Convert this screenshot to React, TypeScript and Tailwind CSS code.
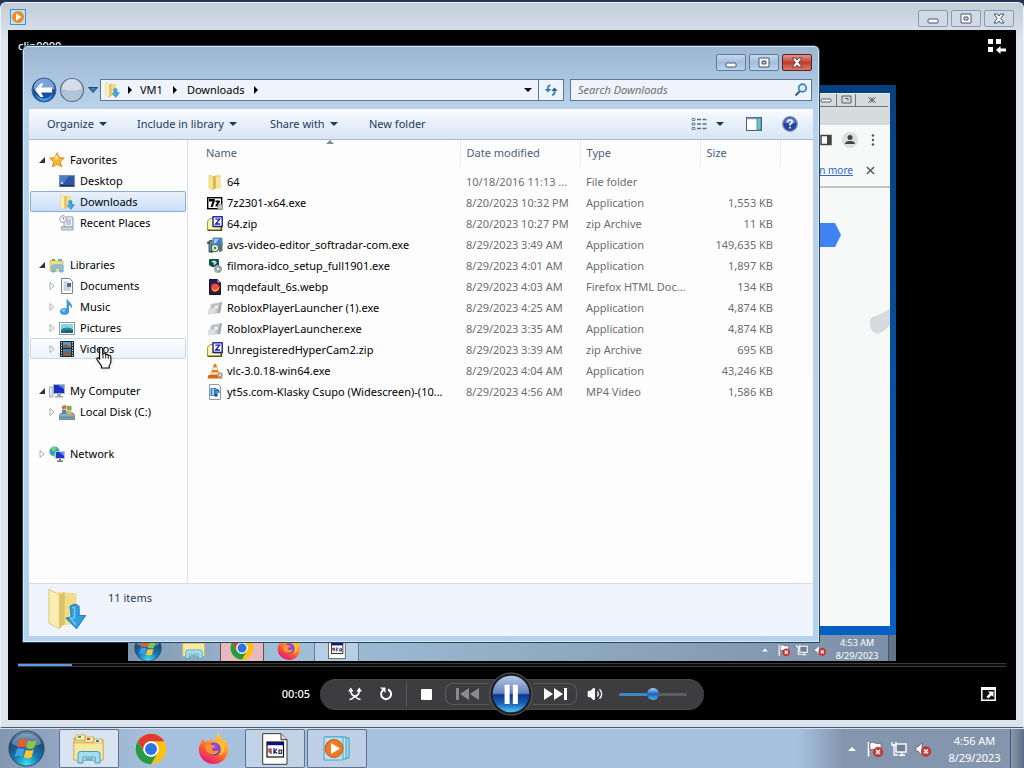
import React, { useState } from 'react';
import { Volume2 } from 'lucide-react';

type IconProps = { className?: string };

/* ---------- small glyphs ---------- */

const DownTriangle: React.FC<IconProps> = ({ className = 'w-2 h-1 text-[#1e395b]' }) => (
  <svg viewBox="0 0 8 4" className={className} fill="currentColor"><path d="M0 0h8L4 4z" /></svg>
);

const RightTriangle: React.FC<IconProps> = ({ className = 'w-1 h-2 text-black' }) => (
  <svg viewBox="0 0 4 8" className={className} fill="currentColor"><path d="M0 0l4 4-4 4z" /></svg>
);

const TreeArrow = ({ open }: { open: boolean }) => (
  <svg viewBox="0 0 8 8" className="w-2 h-2 shrink-0">
    {open ? <path d="M7 1v6H1z" fill="#333" /> : <path d="M2 .5v7L6 4z" fill="#fff" stroke="#999" strokeWidth=".8" />}
  </svg>
);

/* ---------- folder and file icons ---------- */

const FolderIcon: React.FC<IconProps> = ({ className = 'w-4 h-4' }) => (
  <svg viewBox="0 0 16 16" className={className}>
    <path d="M6 2l7-1v13l-7 1z" fill="#e9cf6c" />
    <path d="M8 2.500l6 .5v11l-5 .8z" fill="#f5e49a" />
    <path d="M2 1l4 1.500V16l-4-2z" fill="#f8e796" stroke="#d3b551" strokeWidth=".5" />
    <path d="M6 2.500l3-.5v12l-3 2z" fill="#dcbc52" />
  </svg>
);

const DownloadFolderIcon: React.FC<IconProps> = ({ className = 'w-4 h-4' }) => (
  <svg viewBox="0 0 32 32" className={className}>
    <path d="M10 3l14 1v23l-14 2z" fill="#f1dc8c" />
    <path d="M3 1l8 4v26l-8-4z" fill="#fbeeb0" stroke="#d9bd62" strokeWidth=".6" />
    <path d="M11 5l4-2v24l-4 4z" fill="#dcc06a" />
    <path d="M19 14q4-3 7 0v7h5l-7 10-8-8 4-1z" fill="#2f9fe0" stroke="#1470b4" strokeWidth=".7" />
    <path d="M20.500 15h2v8h-3l4 5" fill="none" stroke="#7cc9f3" strokeWidth="1" />
  </svg>
);

const StarIcon = () => (
  <svg viewBox="0 0 16 16" className="w-4 h-4">
    <path d="M8 .8l2.200 4.700 5.100.6-3.800 3.500 1 5.200L8 12.300l-4.500 2.500 1-5.200L.7 6.100l5.100-.6z" fill="#fbb631" stroke="#d17a17" strokeWidth=".8" />
    <path d="M8 2.500L9.500 6 8 8 5 6.500z" fill="#fee08a" />
  </svg>
);

const DesktopIcon = () => (
  <svg viewBox="0 0 16 16" className="w-4 h-4">
    <rect x=".5" y="2.500" width="15" height="11" fill="#2c56a8" stroke="#7c8da8" />
    <path d="M1 3h9L4 11H1z" fill="#4f7bcd" />
    <path d="M1 12h14v1.500H1z" fill="#17315f" />
    <path d="M2 9h2v2H2z" fill="#b5d0f2" />
  </svg>
);

const RecentIcon = () => (
  <svg viewBox="0 0 16 16" className="w-4 h-4">
    <path d="M5 2h9v10H5z" fill="#eef2f5" stroke="#8b99a5" />
    <path d="M7 5h5M7 7h5M7 9h5" stroke="#8da2b5" />
    <path d="M2 12h12v3H3z" fill="#d5dde3" stroke="#8592a0" strokeWidth=".8" />
    <circle cx="4" cy="4" r="3.400" fill="#f7f9fa" stroke="#9aa7b2" />
    <path d="M4 2v2h1.500" stroke="#5f7182" strokeWidth=".8" fill="none" />
  </svg>
);

const LibrariesIcon = () => (
  <svg viewBox="0 0 16 16" className="w-4 h-4">
    <path d="M1 3h5l1 1h7v10H1z" fill="#f0dd85" stroke="#cbb04f" strokeWidth=".7" />
    <path d="M3 2h3v2H3z" fill="#6fb24a" />
    <path d="M9 2h4v2H9z" fill="#60a9df" />
    <path d="M3 15V9q0-1 1-1h9q1 0 1 1v6h-3v-4H6v4z" fill="#8bc9ea" stroke="#4a94c0" strokeWidth=".7" />
  </svg>
);

const DocumentsIcon = () => (
  <svg viewBox="0 0 16 16" className="w-4 h-4">
    <path d="M2.500.5h8l3 3v12h-11z" fill="#fdfdfe" stroke="#76838f" />
    <path d="M4.500 4h4M4.500 6h3M4.500 8h3M4.500 10h7M4.500 12h7" stroke="#9aa6b2" />
    <path d="M8 5h4v4H8z" fill="#56697c" />
  </svg>
);

const MusicIcon = () => (
  <svg viewBox="0 0 16 16" className="w-4 h-4">
    <path d="M8 .5c1 2.500 5 3 4.500 8-.7-2-2-2.500-3-2.700V12.500H8z" fill="#41a4ea" stroke="#1b76bd" strokeWidth=".6" />
    <ellipse cx="5.500" cy="12.500" rx="4.200" ry="3" fill="#3d9fe8" stroke="#1f7ac4" strokeWidth=".6" />
    <ellipse cx="4.500" cy="11.600" rx="1.800" ry="1" fill="#a5d8f8" />
  </svg>
);

const PicturesIcon = () => (
  <svg viewBox="0 0 16 16" className="w-4 h-4">
    <rect x=".5" y="2.500" width="15" height="12" fill="#fff" stroke="#8a97a4" />
    <rect x="2" y="4" width="12" height="9" fill="#8ad3ea" />
    <path d="M2 9q6-3 12 0v4H2z" fill="#2b8b81" />
    <path d="M2 11q6-2 12 0v2H2z" fill="#1d5f87" />
  </svg>
);

const VideosIcon = () => (
  <svg viewBox="0 0 16 16" className="w-4 h-4">
    <path d="M1 0h14v16H1z" fill="#20292f" />
    <path d="M4 1h8v6H4z" fill="#4f9fcb" />
    <path d="M4 8h8v7H4z" fill="#3881a9" />
    <path d="M4 5l3-2 5 3v1H4zM4 13l4-3 4 3v2H4z" fill="#8a5d47" />
    <path d="M2.500 1v14M13.500 1v14" stroke="#dfe7eb" strokeDasharray="1.300 1.300" />
  </svg>
);

const ComputerIcon = () => (
  <svg viewBox="0 0 16 16" className="w-4 h-4">
    <path d="M.5 4h3.500v10H.5z" fill="#dfe5ea" stroke="#8793a0" strokeWidth=".7" />
    <path d="M4.500 1.500h11v9h-11z" fill="#1b2fc4" stroke="#aab5c1" />
    <path d="M9 2h6v4z" fill="#6f8cf0" />
    <path d="M8 11h4v2H8zM6 13h8v1.500H6z" fill="#9da8b4" />
  </svg>
);

const DiskIcon = () => (
  <svg viewBox="0 0 16 16" className="w-4 h-4">
    <path d="M2 9h12l2 3v3.500H0V12z" fill="#9aa9b4" stroke="#5c6d7a" strokeWidth=".7" />
    <path d="M1 12.500h14v2H1z" fill="#5f91a9" />
    <path d="M3 2.500q2-2 4.500-1V5Q5 4 3 6z" fill="#d9683c" />
    <path d="M8 1.500q2 1 4.500 0V6Q10 7 8 6z" fill="#7dab48" />
    <path d="M3 6.500Q5 5 7.500 6v4H3z" fill="#4a86c4" />
    <path d="M8 6.500q2 1 4.500.2V10H8z" fill="#e5b73a" />
  </svg>
);

const NetworkIcon = () => (
  <svg viewBox="0 0 16 16" className="w-4 h-4">
    <circle cx="5.500" cy="5.500" r="5" fill="#2f9fbd" />
    <path d="M2 2q4-3 6 1L4 6zM3 9l4-2 1 3z" fill="#7ed06a" />
    <path d="M6.500 5.500h9v7h-9z" fill="#1d35c9" stroke="#b9c4cf" />
    <path d="M10 6h5v4z" fill="#6b89ee" />
    <path d="M10 13h2v1.500h2V16H8v-1.500h2z" fill="#6f7b88" />
  </svg>
);

const SevenZipIcon = () => (
  <svg viewBox="0 0 16 16" className="w-4 h-4">
    <rect x=".7" y="2.700" width="14" height="11" fill="#fff" stroke="#000" strokeWidth="1.400" />
    <path d="M2 4h5.800v2L5.800 12H3.500l2-5.500H2z" />
    <path d="M8.500 5.500h4.300v1.800l-2 2.400h2v1.800H8.500V9.700l2-2.400h-2z" />
    <circle cx="13" cy="12" r="2.900" fill="#98a1a5" />
    <path d="M11 12h4M13 10v4" stroke="#d8dddf" />
  </svg>
);

const ZipIcon = () => (
  <svg viewBox="0 0 16 16" className="w-4 h-4">
    <path d="M.6 14V5.500Q1 3.500 3.500 2.500H7V11h6.500v3z" fill="#fafab0" stroke="#96963c" strokeWidth="1" />
    <path d="M.6 14.300h14V11" stroke="#55551f" strokeWidth="1.200" fill="none" />
    <rect x="6" y=".8" width="9.200" height="9.600" fill="#fff" stroke="#1a1aa0" strokeWidth="1.400" />
    <path d="M8.300 3.200h4.300L8.600 8h4.400" fill="none" stroke="#1a1aa0" strokeWidth="1.300" />
  </svg>
);

const SetupIcon = () => (
  <svg viewBox="0 0 16 16" className="w-4 h-4">
    <path d="M6 1h9v8H6z" fill="#3a7fd0" stroke="#7b8c99" />
    <path d="M7 2h5L8 7H7z" fill="#9bcdf3" />
    <path d="M.5 5h2v1.500h-2zM2 4l3-1v12H2z" fill="#6d8f94" stroke="#2e4448" strokeWidth=".8" />
    <circle cx="8" cy="11" r="3.800" fill="#dcebe0" stroke="#33574f" strokeWidth="1" />
    <circle cx="8" cy="11" r="1.300" fill="#2d8d5a" />
    <path d="M12 9l3.500-4v9l-3.500 1z" fill="#5b7277" />
    <path d="M3 15h3" stroke="#2e4448" />
  </svg>
);

const FilmoraIcon = () => (
  <svg viewBox="0 0 16 16" className="w-4 h-4">
    <path d="M3 1h8q1 0 1 1v6q0 1-1 1H5L2 7V2q0-1 1-1z" fill="#174b4c" />
    <path d="M4 3l4-.5 2 2-3 3-.5-2.500z" fill="#a6e6d8" />
    <circle cx="11" cy="11" r="4" fill="#a6afb1" />
    <path d="M8 10l5 4M11 7.500l3 4" stroke="#6f7c7f" strokeWidth=".8" />
    <circle cx="11" cy="11" r="1.300" fill="#eef1f1" />
  </svg>
);

const WebpIcon = () => (
  <svg viewBox="0 0 16 16" className="w-4 h-4">
    <path d="M2.500.5h8l3 3v12h-11z" fill="#281a4f" stroke="#18112f" />
    <circle cx="8" cy="8.500" r="4" fill="#ef4a3d" />
    <path d="M4.500 9q2 3 5.500 1t1-5q3 3 .3 6t-5.300 1z" fill="#fd9c2b" />
    <path d="M10.500.5v3h3z" fill="#b7a9d5" />
  </svg>
);

const RobloxIcon = () => (
  <svg viewBox="0 0 16 16" className="w-4 h-4">
    <path d="M4 4l11-2-2 11-11 1z" fill="#bfc3c5" />
    <path d="M13 3l2-1-2 11-2 .2z" fill="#9ea3a6" />
    <path d="M1 9l8-1-1 6-7 .5z" fill="#dcdedf" />
    <path d="M8 6l3-.4-.5 3-3 .2z" fill="#f4f5f5" />
  </svg>
);

const VlcIcon = () => (
  <svg viewBox="0 0 16 16" className="w-4 h-4">
    <path d="M7 1h2l4 12H3z" fill="#ee7d19" />
    <path d="M6 4.500h4l.8 2.500H5.200zM4.500 9.500h7l.7 2H3.800z" fill="#f3efea" />
    <path d="M1.500 12h13l1 3.500H.5z" fill="#d9640f" />
    <circle cx="13" cy="12" r="2.800" fill="#b1a58c" />
    <circle cx="13" cy="12" r="1" fill="#f0ece0" />
  </svg>
);

const Mp4Icon = () => (
  <svg viewBox="0 0 16 16" className="w-4 h-4">
    <path d="M2.500.5h9l2 2v13h-11z" fill="#fbfdff" stroke="#8d9aa6" />
    <path d="M3.500 4h6v8h-6z" fill="#2f86c9" />
    <path d="M5 5h2v1.500H5zM5 7.300h2v1.500H5zM5 9.600h2v1.500H5z" fill="#d9eefb" />
    <path d="M10 5v6M10 5.500q2.500 1 2 3.500" stroke="#14578d" strokeWidth="1.100" fill="none" />
    <circle cx="9" cy="11.300" r="1.500" fill="#14578d" />
  </svg>
);

/* ---------- taskbar and brand icons ---------- */

const StartOrb: React.FC<IconProps> = ({ className }) => (
  <svg viewBox="0 0 40 40" className={className}>
    <defs>
      <radialGradient id="orb" cx=".5" cy=".95" r=".95">
        <stop offset="0" stopColor="#3fe0f5" />
        <stop offset=".4" stopColor="#1476ae" />
        <stop offset=".75" stopColor="#1e4a78" />
        <stop offset="1" stopColor="#6f93b6" />
      </radialGradient>
    </defs>
    <circle cx="20" cy="20" r="19" fill="url(#orb)" stroke="#274865" strokeWidth="1" />
    <path d="M4 15a17 17 0 0132 0q-16 7-32 0z" fill="#fff" opacity=".3" />
    <path d="M12 11q4-2.500 8.500-.4L18.300 19q-4.300-2-8.300.2z" fill="#ef5a26" />
    <path d="M22 11.300q4 2 8.500-.3L28.300 19.500q-4.300 2-8.500 0z" fill="#8cc63e" />
    <path d="M9.500 20.800q4-2.300 8.300-.2L15.600 29q-4-2.200-8.300.1z" fill="#3fa0e8" />
    <path d="M19.300 21.300q4.200 2 8.500-.1L25.500 29.500q-4 2-8.300 0z" fill="#fdc82f" />
  </svg>
);

const ExplorerIcon: React.FC<IconProps> = ({ className }) => (
  <svg viewBox="0 0 32 30" className={className}>
    <path d="M1 4h10l2 2h17v20H1z" fill="#e9cf74" stroke="#b89a42" strokeWidth=".8" />
    <path d="M3 1h9v5H3zM12 3h9v5h-9zM20 5h9v5h-9z" fill="#f9f1bf" stroke="#c7a94e" strokeWidth=".8" />
    <path d="M5 2h3v2H5z" fill="#3ca84a" />
    <path d="M14 4h3v2h-3z" fill="#d4472c" />
    <path d="M23 6h3v2h-3z" fill="#3d7fd1" />
    <path d="M1 9h29v17H1z" fill="#f8e9a0" stroke="#d1b358" strokeWidth=".8" />
    <path d="M5 29v-9q0-2.500 2.500-2.500h17Q27 17.500 27 20v9h-5v-6H10v6z" fill="#a4dcf3" stroke="#3c9dca" strokeWidth="1" />
    <path d="M12 24h8v3h-8z" fill="#66b7dc" />
  </svg>
);

const ChromeIcon: React.FC<IconProps> = ({ className }) => (
  <svg viewBox="0 0 48 48" className={className}>
    <circle cx="24" cy="24" r="23" fill="#fbc116" />
    <path d="M4.100 12.500a23 23 0 0139.800 0H24a11.500 11.500 0 00-10 17.250z" fill="#df3b2f" />
    <path d="M4.100 12.500L14 29.750A11.500 11.500 0 0034 29.750L24 47A23 23 0 014.100 12.500z" fill="#259b48" />
    <circle cx="24" cy="24" r="11.500" fill="#fff" />
    <circle cx="24" cy="24" r="9" fill="#2b74e3" />
  </svg>
);

const FirefoxIcon: React.FC<IconProps> = ({ className }) => (
  <svg viewBox="0 0 32 32" className={className}>
    <defs>
      <linearGradient id="fox" x1=".85" y1="0" x2=".3" y2="1">
        <stop offset="0" stopColor="#ffe14a" />
        <stop offset=".4" stopColor="#ff9a2b" />
        <stop offset=".7" stopColor="#fb5237" />
        <stop offset="1" stopColor="#e31587" />
      </linearGradient>
      <radialGradient id="globe" cx=".6" cy=".3" r=".8">
        <stop offset="0" stopColor="#a04fe8" />
        <stop offset="1" stopColor="#4f35b8" />
      </radialGradient>
    </defs>
    <path d="M2.500 11Q4 7.500 6 6q0 2 1 3 2-1 4.500-1Q13 5.500 15 5q-.5 2 .5 3.500 2-.5 3 0Q17.500 4 21 0q1.500 4.500 6 8l.8-1.500Q31 11 31 17a15 14.500 0 01-30 1q-.5-4 1.500-7z" fill="url(#fox)" />
    <circle cx="16.500" cy="16.500" r="6.800" fill="url(#globe)" />
    <path d="M8 12q4-1.500 6.500.3 2.500.2 3.500 1.200-.5 1.800-3.500 2.200-.5 2.800 3 3 2 0 4-1.500-1 4.500-5.500 5-6.500-.2-8-6-.3-2.500 0-4.200z" fill="#ff9133" />
    <path d="M17 8q6 1 7 7 1 5-3 8.500 6-1.500 6.500-8Q27 10 22.500 8z" fill="#ffc23a" />
  </svg>
);

const DllPageIcon: React.FC<IconProps> = ({ className }) => (
  <svg viewBox="0 0 26 32" className={className}>
    <path d="M.7.700h18.300l6 6V31.300H.7z" fill="#fff" stroke="#333" strokeWidth="1" />
    <path d="M19 .7v6h6" fill="#ddd" stroke="#333" />
    <rect x="5" y="9" width="16.500" height="15" fill="#fff" stroke="#111" strokeWidth="1.200" />
    <path d="M5 9h16.500v3.200H5z" fill="#10107c" />
    <path d="M7 16h2v3H7zM7 16v1M9 16v5" fill="none" stroke="#8c1c1c" strokeWidth="1.200" />
    <path d="M12 15v6M15 16l-2.500 2 2.500 2.500" stroke="#1c1c8c" strokeWidth="1.200" fill="none" />
    <path d="M17 17h2.500v3.500H17z" fill="none" stroke="#222" strokeWidth="1.200" />
  </svg>
);

const MediaPlayerIcon: React.FC<IconProps> = ({ className }) => (
  <svg viewBox="0 0 28 26" className={className}>
    <path d="M4 2h22v20H4z" fill="#a9dbee" stroke="#3e9cc4" />
    <path d="M2 1h21v22H2z" fill="#c4e6f3" stroke="#3e9cc4" />
    <path d="M1 1h19v23H1z" fill="#b9dff0" stroke="#4ba6cc" />
    <circle cx="11" cy="12.500" r="9" fill="#ef7a22" stroke="#cf5a10" />
    <path d="M8 7l9 5.500L8 18z" fill="#fff" />
  </svg>
);

const WmpTitleIcon = () => (
  <svg viewBox="0 0 16 16" className="w-4 h-4">
    <rect x=".5" y=".5" width="15" height="15" fill="#c2e2f5" stroke="#3d93cc" />
    <circle cx="8" cy="8" r="6" fill="#f08a22" />
    <path d="M6 4.300L11.500 8 6 11.700z" fill="#fff" />
  </svg>
);

const FlagIcon: React.FC<IconProps> = ({ className }) => (
  <svg viewBox="0 0 16 16" className={className}>
    <path d="M1.500 1v14.500" stroke="#fff" strokeWidth="1.600" />
    <path d="M3 2q3-1.500 5 0t6 0v7q-3 1.500-6 0t-5 0z" fill="#fff" stroke="#3d4b5c" strokeWidth=".6" />
    <circle cx="11" cy="11" r="4.700" fill="#d8362f" stroke="#a01e1a" strokeWidth=".6" />
    <path d="M9 9l4 4M13 9l-4 4" stroke="#fff" strokeWidth="1.500" />
  </svg>
);

const NetTrayIcon: React.FC<IconProps> = ({ className }) => (
  <svg viewBox="0 0 16 16" className={className}>
    <rect x="5" y="3" width="10" height="8" fill="#6d7f96" stroke="#fff" strokeWidth="1.400" />
    <path d="M8 14.300h6M11 11v3" stroke="#fff" strokeWidth="1.500" />
    <path d="M1 1v3h4V1M3 4v10h4" stroke="#fff" strokeWidth="1.300" fill="none" />
  </svg>
);

const MutedIcon: React.FC<IconProps> = ({ className }) => (
  <svg viewBox="0 0 16 16" className={className}>
    <path d="M1 6h2l4-4.500v13L3 10H1z" fill="#fff" stroke="#3d4b5c" strokeWidth=".6" />
    <circle cx="11" cy="10.500" r="4.700" fill="#d8362f" stroke="#a01e1a" strokeWidth=".6" />
    <path d="M9 8.500l4 4M13 8.500l-4 4" stroke="#fff" strokeWidth="1.500" />
  </svg>
);

/* ---------- window chrome ---------- */

const captionGlyphs = {
  Minimize: <rect x="4" y="8" width="10" height="4" rx="1" />,
  Maximize: <path fillRule="evenodd" d="M4 3h10v9H4zM7 6h4v3H7z" />,
  Close: <path d="M4 3h3.500L9 5l1.500-2H14l-3.300 4.500L14 12h-3.500L9 10l-1.500 2H4l3.300-4.500z" />,
};

const CaptionButtons = ({ active }: { active: boolean }) => (
  <div className="flex gap-[3px]">
    {(Object.keys(captionGlyphs) as (keyof typeof captionGlyphs)[]).map((name) => {
      const red = active && name === 'Close';
      return (
        <button
          key={name}
          aria-label={name}
          className={`w-[30px] h-[17px] flex items-center justify-center rounded-xs border ${
            red
              ? 'border-[#5c1f23] bg-linear-to-b from-[#dc9a90] via-[#c03b2c] to-[#d77a62]'
              : active
                ? 'border-[#5f7a9a] bg-linear-to-b from-[#c5d8ec] via-[#a3bdd9] to-[#bdd5ee]'
                : 'border-[#8d99ad] bg-[#cfdae6]'
          }`}
        >
          <svg viewBox="0 0 18 15" className="w-[18px] h-[15px]" fill="#fff" stroke={red ? '#6b3a3a' : '#46536b'} strokeWidth="1">
            {captionGlyphs[name]}
          </svg>
        </button>
      );
    })}
  </div>
);

/* ---------- explorer window ---------- */

const places = [
  [
    { label: 'Favorites', icon: <StarIcon />, level: 0, arrow: 'open' },
    { label: 'Desktop', icon: <DesktopIcon />, level: 1, arrow: '' },
    { label: 'Downloads', icon: <DownloadFolderIcon />, level: 1, arrow: '' },
    { label: 'Recent Places', icon: <RecentIcon />, level: 1, arrow: '' },
  ],
  [
    { label: 'Libraries', icon: <LibrariesIcon />, level: 0, arrow: 'open' },
    { label: 'Documents', icon: <DocumentsIcon />, level: 1, arrow: 'closed' },
    { label: 'Music', icon: <MusicIcon />, level: 1, arrow: 'closed' },
    { label: 'Pictures', icon: <PicturesIcon />, level: 1, arrow: 'closed' },
    { label: 'Videos', icon: <VideosIcon />, level: 1, arrow: 'closed' },
  ],
  [
    { label: 'My Computer', icon: <ComputerIcon />, level: 0, arrow: 'open' },
    { label: 'Local Disk (C:)', icon: <DiskIcon />, level: 1, arrow: 'closed' },
  ],
  [{ label: 'Network', icon: <NetworkIcon />, level: 0, arrow: 'closed' }],
];

const files = [
  { name: '64', icon: <FolderIcon />, date: '10/18/2016 11:13 ...', type: 'File folder', size: '' },
  { name: '7z2301-x64.exe', icon: <SevenZipIcon />, date: '8/20/2023 10:32 PM', type: 'Application', size: '1,553 KB' },
  { name: '64.zip', icon: <ZipIcon />, date: '8/20/2023 10:27 PM', type: 'zip Archive', size: '11 KB' },
  { name: 'avs-video-editor_softradar-com.exe', icon: <SetupIcon />, date: '8/29/2023 3:49 AM', type: 'Application', size: '149,635 KB' },
  { name: 'filmora-idco_setup_full1901.exe', icon: <FilmoraIcon />, date: '8/29/2023 4:01 AM', type: 'Application', size: '1,897 KB' },
  { name: 'mqdefault_6s.webp', icon: <WebpIcon />, date: '8/29/2023 4:03 AM', type: 'Firefox HTML Doc...', size: '134 KB' },
  { name: 'RobloxPlayerLauncher (1).exe', icon: <RobloxIcon />, date: '8/29/2023 4:25 AM', type: 'Application', size: '4,874 KB' },
  { name: 'RobloxPlayerLauncher.exe', icon: <RobloxIcon />, date: '8/29/2023 3:35 AM', type: 'Application', size: '4,874 KB' },
  { name: 'UnregisteredHyperCam2.zip', icon: <ZipIcon />, date: '8/29/2023 3:39 AM', type: 'zip Archive', size: '695 KB' },
  { name: 'vlc-3.0.18-win64.exe', icon: <VlcIcon />, date: '8/29/2023 4:04 AM', type: 'Application', size: '43,246 KB' },
  { name: 'yt5s.com-Klasky Csupo (Widescreen)-(10...', icon: <Mp4Icon />, date: '8/29/2023 4:56 AM', type: 'MP4 Video', size: '1,586 KB' },
];

const HandCursor = () => (
  <svg viewBox="0 0 18 24" className="absolute left-[66px] top-2 w-[18px] h-6 drop-shadow-sm">
    <path
      d="M5 1.500q1.700 0 1.700 2V9l.3-1.500q2-.7 2.600 1 2-.6 2.600.8 2.300-.4 2.700 1.500V16q-.4 2-1.700 3.500V22H5.500v-2L1 13.500q-.6-2 1.600-1.500l1 1V3.500q0-2 1.400-2z"
      fill="#fff"
      stroke="#000"
      strokeWidth="1.100"
    />
    <path d="M7 9v3.500M9.700 9v3.500M12.300 10v3" stroke="#000" strokeWidth=".9" />
  </svg>
);

const Sidebar = () => {
  const [selected, setSelected] = useState('Downloads');
  return (
    <nav className="w-[159px] shrink-0 border-r border-[#d9e2ee] px-px pt-[9px] flex flex-col gap-[21px]">
      {places.map((group) => (
        <ul key={group[0].label}>
          {group.map((p) => (
            <li key={p.label} className="relative">
              <button
                onClick={() => setSelected(p.label)}
                className={`w-full h-[21px] flex items-center border rounded-xs text-black ${p.level ? 'pl-[17px]' : 'pl-[7px]'} ${
                  p.label === selected
                    ? 'border-[#84acdd] bg-linear-to-b from-[#eaf2fc] to-[#c9def7]'
                    : p.label === 'Videos'
                      ? 'border-[#c4d8ee] bg-linear-to-b from-[#fafcfe] to-[#edf3fb]'
                      : 'border-transparent'
                }`}
              >
                <span className="w-[11px] flex">{p.arrow && <TreeArrow open={p.arrow === 'open'} />}</span>
                {p.icon}
                <span className="ml-[5px] whitespace-nowrap">{p.label}</span>
              </button>
              {p.label === 'Videos' && <HandCursor />}
            </li>
          ))}
        </ul>
      ))}
    </nav>
  );
};

const FileTable = () => (
  <div className="flex-1 min-w-0 overflow-hidden">
    <table className="w-full table-fixed text-left whitespace-nowrap">
      <colgroup>
        <col />
        <col className="w-[120px]" />
        <col className="w-[120px]" />
        <col className="w-[80px]" />
        <col className="w-[33px]" />
      </colgroup>
      <thead>
        <tr className="h-[26px] text-[#4c607a]">
          <th className="relative font-normal pl-[18px] border-r border-[#e6ebf1]">
            Name
            <svg viewBox="0 0 8 4" className="absolute left-[138px] top-0 w-2 h-1"><path d="M0 4l4-4 4 4z" fill="#7d8ea3" /></svg>
          </th>
          <th className="font-normal pl-1.5 border-r border-[#e6ebf1]">Date modified</th>
          <th className="font-normal pl-1.5 border-r border-[#e6ebf1]">Type</th>
          <th className="font-normal pl-1.5 border-r border-[#e6ebf1]">Size</th>
          <th />
        </tr>
        <tr className="h-[5px]" />
      </thead>
      <tbody className="text-[#6d6d6d]">
        {files.map((f) => (
          <tr key={f.name} className="h-[21px]">
            <td className="pl-[19px] text-black">
              <span className="flex items-center gap-1">
                {f.icon}
                {f.name}
              </span>
            </td>
            <td className="pl-1.5">{f.date}</td>
            <td className="pl-1.5">{f.type}</td>
            <td className="pr-[7px] text-right">{f.size}</td>
            <td />
          </tr>
        ))}
      </tbody>
    </table>
  </div>
);

const NavRow = () => (
  <div className="h-[25px] mt-0.5 pr-px flex items-center">
    <button aria-label="Back" className="ml-0.5">
      <svg viewBox="0 0 26 26" className="w-[26px] h-[26px]">
        <circle cx="13" cy="13" r="12" fill="#1d4f9f" stroke="#4c5f7f" />
        <path d="M2.500 12a10.500 10.500 0 0121 0q-10 3-21 0z" fill="#7ba4dc" />
        <path d="M4 17q9 9 18 0-3 7-9 7t-9-7z" fill="#39a4ec" />
        <path d="M12.500 6.500L10 10.500h11v5H10l2.500 4.500h-3L4 13l5.500-6.500z" fill="#fff" />
      </svg>
    </button>
    <button aria-label="Forward" className="ml-0.5">
      <svg viewBox="0 0 26 26" className="w-[26px] h-[26px]">
        <circle cx="13" cy="13" r="11.500" fill="#b3c3d6" stroke="#5d6f88" strokeWidth="1.200" />
        <path d="M3 12a10 10 0 0120 0q-10 3-20 0z" fill="#d3deea" />
      </svg>
    </button>
    <button aria-label="Recent pages" className="w-[15px] flex justify-center">
      <svg viewBox="0 0 10 6" className="w-[10px] h-1.5"><path d="M.5.5h9L5 5.500z" fill="#3f79b4" stroke="#24466e" /></svg>
    </button>
    <div className="flex-1 h-[22px] flex items-center border border-[#5f7792] bg-[#eff4fc] text-black">
      <DownloadFolderIcon className="w-4 h-4 ml-[3px]" />
      <RightTriangle className="w-1 h-2 ml-2" />
      <button className="ml-2">VM1</button>
      <RightTriangle className="w-1 h-2 ml-2.5" />
      <button className="ml-2.5">Downloads</button>
      <RightTriangle className="w-1 h-2 ml-2.5" />
      <button aria-label="Previous locations" className="ml-auto mr-1.5"><DownTriangle className="w-2 h-1 text-black" /></button>
      <button aria-label="Refresh" className="w-[25px] h-full border-l border-[#5f7792] flex items-center justify-center">
        <svg viewBox="0 0 14 12" className="w-[14px] h-3" fill="none" stroke="#2e7dbf" strokeWidth="1.700">
          <path d="M6.500 1.500Q4 1 4 4v2" />
          <path d="M.8 5h6.400L4 8.500z" fill="#2e7dbf" stroke="none" />
          <path d="M8 11q2.500 0 2.500-3V6.500" />
          <path d="M7.300 7h6.400l-3.200-3.500z" fill="#2a5f9c" stroke="none" />
        </svg>
      </button>
    </div>
    <label className="ml-1.5 w-[242px] h-[22px] flex items-center border border-[#5f7792] bg-[#eff4fc] px-[7px]">
      <input type="search" aria-label="Search Downloads" placeholder="Search Downloads" className="flex-1 min-w-0 bg-transparent outline-none italic placeholder:text-[#6e6e6e]" />
      <svg viewBox="0 0 14 14" className="w-[14px] h-[14px] -mr-1" fill="none">
        <path d="M6 8L1.500 12.500" stroke="#44566e" strokeWidth="2" />
        <circle cx="8.500" cy="5" r="3.800" fill="#d9edfa" stroke="#3a85b8" strokeWidth="1.700" />
      </svg>
    </label>
  </div>
);

const Toolbar = () => (
  <div className="h-[31px] mt-[7px] flex items-center pl-[18px] text-[#1e395b] border-b border-[#a9b9cd] bg-linear-to-b from-[#fafcff] via-[#e6effa] to-[#dae6f4]">
    <button className="flex items-center gap-[5px] w-[90px]">Organize <DownTriangle /></button>
    <button className="flex items-center gap-[5px] w-[133px]">Include in library <DownTriangle /></button>
    <button className="flex items-center gap-[5px] w-[99px]">Share with <DownTriangle /></button>
    <button>New folder</button>
    <div className="ml-auto flex items-center pr-[15px]">
      <button aria-label="Change view">
        <svg viewBox="0 0 16 14" className="w-4 h-[14px]" fill="none" stroke="#5b6b80">
          <path d="M1 1.500h3v2H1zM1 6h3v2H1zM1 10.500h3v2H1z" strokeWidth=".8" />
          <path d="M6 2.500h4M11.500 2.500h4M6 7h4M11.500 7h4M6 11.500h4M11.500 11.500h4" strokeWidth="1.300" />
        </svg>
      </button>
      <button aria-label="More view options" className="ml-[9px]"><DownTriangle /></button>
      <button aria-label="Preview pane" className="ml-[22px]">
        <svg viewBox="0 0 16 14" className="w-4 h-[14px]">
          <rect x=".5" y=".5" width="15" height="13" fill="#fff" stroke="#4a6077" />
          <path d="M1 1.500h10" stroke="#7c9cb8" strokeWidth="1.500" />
          <path d="M11 1h4v12h-4z" fill="#74c3c8" stroke="#3e7f8f" strokeWidth=".8" />
        </svg>
      </button>
      <button aria-label="Help" className="ml-5">
        <svg viewBox="0 0 16 16" className="w-4 h-4">
          <circle cx="8" cy="8" r="7.300" fill="#2544a6" stroke="#8493ab" strokeWidth="1.300" />
          <path d="M2.500 6.500a5.700 5.700 0 0111 0q-5 2-11 0z" fill="#6d8fe0" />
          <path d="M5.800 6.200Q5.800 4 8 4t2.200 2Q10.200 7.300 8 8.300V9.500M8 10.800v1.600" stroke="#fff" strokeWidth="1.600" fill="none" />
        </svg>
      </button>
    </div>
  </div>
);

const ExplorerWindow = () => (
  <section className="absolute left-[22px] right-[204px] top-[45px] bottom-[125px] flex flex-col rounded-t-md border border-[#2a4257] bg-linear-to-b from-[#9cb6d2] via-[#b9d1ea] via-10% to-[#b4d2ec] px-1.5 pb-1.5 inset-ring inset-ring-[#d3ecfa]">
    <div className="h-[29px] pt-2 pr-px flex justify-end">
      <CaptionButtons active />
    </div>
    <NavRow />
    <Toolbar />
    <div className="flex-1 min-h-0 flex bg-[#fdfdfd]">
      <Sidebar />
      <FileTable />
    </div>
    <footer className="h-[53px] flex border-t border-[#d3dce8] bg-[#f0f4fc] text-[#2b3b52]">
      <DownloadFolderIcon className="w-[42px] h-[42px] ml-4 mt-1" />
      <p className="ml-[21px] mt-[6px]">11 items</p>
    </footer>
  </section>
);

/* ---------- recorded desktop shown in the player ---------- */

const Recording = () => (
  <div className="h-full aspect-[4/3] flex flex-col overflow-hidden bg-linear-to-b from-[#07407f] to-[#0661c6]">
    <div className="flex-1 mt-2 mb-[9px] mr-1.5 flex flex-col bg-[#f7f8f8]">
      <div className="h-8 bg-[#d5dcdc] border-t border-[#dff3fb] flex justify-end items-start pr-[2px]">
        <svg viewBox="0 0 72 14" className="w-[72px] h-[14px]" fill="none" stroke="#535c60">
          <path d="M0 12.500h72M20.500 0v12M39.500 0v12" strokeWidth=".8" />
          <rect x="5" y="5" width="10" height="3" rx="1" fill="#fff" />
          <path d="M26 2h9v7h-9zM29 4.500h3v2" />
          <path d="M52 3l6 6M58 3l-6 6M54 3l6 6M60 3l-6 6" strokeWidth=".8" />
        </svg>
      </div>
      <div className="h-[29px] flex items-center justify-end gap-[10px] pr-3 text-[#444]">
        <svg viewBox="0 0 12 12" className="w-3 h-3"><path d="M1 1.500h10v9H1z" fill="none" stroke="#444" strokeWidth="1.500" /><path d="M7 1h4v10H7z" fill="#444" /></svg>
        <svg viewBox="0 0 16 16" className="w-4 h-4"><circle cx="8" cy="8" r="8" fill="#dcdee0" /><circle cx="8" cy="5.500" r="2.500" fill="#444" /><path d="M3 12q0-3 5-3t5 3z" fill="#444" /></svg>
        <svg viewBox="0 0 10 12" className="w-[10px] h-3" fill="#555"><circle cx="5" cy="1.500" r="1.200" /><circle cx="5" cy="6" r="1.200" /><circle cx="5" cy="10.500" r="1.200" /></svg>
      </div>
      <div className="h-[34px] flex items-center justify-end gap-[13px] pr-[15px] border-b-2 border-[#c2c4c5] text-[10px]">
        <a href="#more" className="text-[#3565c4] underline">Learn more</a>
        <svg viewBox="0 0 10 10" className="w-[9px] h-[9px]"><path d="M1 1l8 8M9 1L1 9" stroke="#555" strokeWidth="1.600" /></svg>
      </div>
      <div className="flex-1 flex flex-col items-end">
        <svg viewBox="0 0 100 120" className="w-[100px] h-[150px] mt-[35px]" preserveAspectRatio="xMaxYMin">
          <path d="M0 0h45l6 12-6 12H0z" fill="#3f82f2" />
          <path d="M80 102q-2-8 8-10l12-6v16q-7 8-13 9-6-2-7-9z" fill="#d9dae0" />
        </svg>
      </div>
    </div>
    <div className="h-[26px] flex items-center gap-px overflow-hidden bg-linear-to-r from-[#8296b0] via-[#a0c0da] via-20% to-[#7c8fa6] text-white text-[9px] leading-[13px]">
      <span className="w-[40px] h-full flex items-center justify-center"><StartOrb className="w-7 h-7" /></span>
      <span className="w-[50px] h-full flex items-center justify-center"><ExplorerIcon className="w-6 h-6" /></span>
      <span className="w-[44px] h-full flex items-center justify-center bg-[#e8b8bf] border-x border-[#6c4a57]"><ChromeIcon className="w-6 h-6" /></span>
      <span className="w-[48px] h-full flex items-center justify-center"><FirefoxIcon className="w-6 h-6" /></span>
      <span className="w-[45px] h-full flex items-center justify-center bg-[#b7cfe4] border-x border-[#64809c]"><DllPageIcon className="w-[18px] h-6" /></span>
      <div className="ml-auto h-full flex items-center">
        <svg viewBox="0 0 8 4" className="w-1.5 h-1 mr-[10px] mt-1"><path d="M0 4l4-4 4 4z" fill="#fff" /></svg>
        <FlagIcon className="w-3 h-3 mr-1.5 mt-1" />
        <NetTrayIcon className="w-3 h-3 mr-1.5 mt-1" />
        <MutedIcon className="w-3 h-3 mt-1" />
        <div className="w-[62px] pt-0.5 text-center"><p>4:53 AM</p><p>8/29/2023</p></div>
        <span className="w-2 h-full border-l border-[#48566a] bg-[#64748a]" />
      </div>
    </div>
  </div>
);

/* ---------- media player ---------- */

const SeekBar = () => {
  const [pos, setPos] = useState(55);
  return (
    <input
      type="range"
      aria-label="Seek"
      min={0}
      max={1000}
      value={pos}
      onChange={(e) => setPos(Number(e.target.value))}
      className="block w-full h-1 appearance-none border-y border-[#3a3b3d] [&::-webkit-slider-thumb]:appearance-none"
      style={{ background: `linear-gradient(to right, #5b9be6 ${pos / 10}%, #0c0c0d ${pos / 10}%)` }}
    />
  );
};

const PlayerControls = () => {
  const [playing, setPlaying] = useState(true);
  const [volume, setVolume] = useState(50);
  return (
    <div className="h-[52px] grid grid-cols-[1fr_auto_1fr] items-center px-2.5 text-white">
      <span className="justify-self-end mr-[10px] text-[11px] font-medium">00:05</span>
      <div className="h-[31px] pl-6 pr-[17px] flex items-center rounded-full bg-[#3d3d3f] border-y border-[#4a4a4c]">
        <button aria-label="Shuffle" className="w-[22px] flex justify-center">
          <svg viewBox="0 0 14 14" className="w-[14px] h-[14px]" fill="none" stroke="#fff" strokeWidth="1.700">
            <path d="M2.800 3.500q0 5 4.200 5.500 4.200-.5 4.200-5.500" />
            <path d="M7 8.500Q5.500 12 1.500 12.500M7 8.500q1.500 3.500 5.500 4" />
            <path d="M0 4.500L2.800.5l2.800 4zM8.400 4.500l2.800-4 2.800 4z" fill="#fff" stroke="none" />
          </svg>
        </button>
        <button aria-label="Repeat" className="ml-[9px] w-[22px] flex justify-center">
          <svg viewBox="0 0 14 14" className="w-[14px] h-[14px]" fill="none" stroke="#fff" strokeWidth="2">
            <path d="M9 2.500A5 5 0 114 3.200" />
            <path d="M1 .5h5.500V6z" fill="#fff" stroke="none" />
          </svg>
        </button>
        <span className="ml-[9px] w-px h-6 bg-[#58585a]" />
        <button aria-label="Stop" className="ml-2 w-[22px] flex justify-center">
          <span className="w-[11px] h-[11px] bg-white rounded-[1px]" />
        </button>
        <button aria-label="Previous" className="ml-2 w-11 h-[22px] flex items-center justify-center border border-r-0 border-[#59595b] rounded-l-lg">
          <svg viewBox="0 0 24 12" className="w-6 h-3" fill="#8b8b8d"><path d="M0 0h3v12H0zM13 0v12L4 6zM23 0v12l-9-6z" /></svg>
        </button>
        <button aria-label={playing ? 'Pause' : 'Play'} onClick={() => setPlaying(!playing)} className="w-[44px]">
          <svg viewBox="0 0 48 48" className="w-[44px] h-[44px]">
            <defs>
              <linearGradient id="play" x1="0" y1="0" x2="0" y2="1">
                <stop offset="0" stopColor="#b7c9ea" />
                <stop offset=".48" stopColor="#6482bd" />
                <stop offset=".52" stopColor="#0f3a8c" />
                <stop offset=".75" stopColor="#155fb5" />
                <stop offset="1" stopColor="#54c4f5" />
              </linearGradient>
            </defs>
            <circle cx="24" cy="24" r="23" fill="#1d1f24" stroke="#66676c" />
            <circle cx="24" cy="24" r="20" fill="url(#play)" />
            {playing ? <path d="M17 14h5.500v21H17zM26 14h5.500v21H26z" fill="#fff" /> : <path d="M18 13l16 11-16 11z" fill="#fff" />}
          </svg>
        </button>
        <button aria-label="Next" className="w-11 h-[22px] flex items-center justify-center border border-l-0 border-[#59595b] rounded-r-lg">
          <svg viewBox="0 0 24 12" className="w-6 h-3" fill="#fff"><path d="M1 0v12l9-6zM11 0v12l9-6zM21 0h3v12h-3z" /></svg>
        </button>
        <button aria-label="Mute" className="ml-[7px] w-[22px] flex justify-center">
          <Volume2 className="w-4 h-4 [&>path:first-child]:fill-white" />
        </button>
        <input
          type="range"
          aria-label="Volume"
          value={volume}
          onChange={(e) => setVolume(Number(e.target.value))}
          className="ml-[13px] w-[68px] h-[3px] appearance-none rounded-full [&::-webkit-slider-thumb]:appearance-none [&::-webkit-slider-thumb]:w-3 [&::-webkit-slider-thumb]:h-3 [&::-webkit-slider-thumb]:rounded-full [&::-webkit-slider-thumb]:bg-linear-to-b [&::-webkit-slider-thumb]:from-[#a9d3f7] [&::-webkit-slider-thumb]:via-[#1c62b8] [&::-webkit-slider-thumb]:to-[#4fb2f0]"
          style={{ background: `linear-gradient(to right, #3f86c6 ${volume}%, #5c5c5e ${volume}%)` }}
        />
      </div>
      <button aria-label="View full screen" className="justify-self-end mr-[10px]">
        <svg viewBox="0 0 15 14" className="w-[15px] h-[14px]">
          <path d="M.8 1h13.400v12.200H.8z" fill="#111" stroke="#fff" strokeWidth="1.500" />
          <path d="M0 0h15v3H0z" fill="#fff" />
          <path d="M7 4.500h5.500V10l-1.800-1.800-3.500 3.300-1.700-1.700 3.300-3.500z" fill="#fff" />
        </svg>
      </button>
    </div>
  );
};

const PlayerWindow = () => (
  <section className="flex-1 min-h-0 mt-0.5 px-[7px] pb-[7px] flex flex-col rounded-t-md border border-b-[#4b5a6c] border-[#eef4f8] bg-linear-to-b from-[#c3cdd8] to-[#dce5ee] to-5%">
    <div className="h-[27px] pl-[2px] pt-1 flex items-start justify-between">
      <div className="pt-[2px]"><WmpTitleIcon /></div>
      <div className="pt-[3px] pr-[2px]"><CaptionButtons active={false} /></div>
    </div>
    <div className="flex-1 min-h-0 flex flex-col bg-black">
      <div className="h-[55px] px-2.5 pt-2 flex items-start justify-between text-white">
        <h1 className="text-[11px] leading-4 font-medium">clip0000</h1>
        <button aria-label="Switch to library">
          <svg viewBox="0 0 18 16" className="w-[18px] h-4" fill="#fff"><path d="M0 1h5v5H0zM8 1h5v5H8zM0 9h5v5H0zM8 12l4.500-4v2.500H18v3h-5.500V16z" /></svg>
        </button>
      </div>
      <div className="flex-1 min-h-0 flex justify-center">
        <Recording />
      </div>
      <div className="px-2.5 py-[2px] pb-px"><SeekBar /></div>
      <PlayerControls />
    </div>
  </section>
);

/* ---------- taskbar ---------- */

const apps = [
  { name: 'Windows Explorer', icon: <ExplorerIcon className="w-8 h-[30px]" />, look: 'border-[#5d7390] bg-[#d9e2ef]' },
  { name: 'Google Chrome', icon: <ChromeIcon className="w-8 h-8" />, look: 'border-transparent' },
  { name: 'Firefox', icon: <FirefoxIcon className="w-[31px] h-[31px]" />, look: 'border-transparent' },
  { name: 'System file', icon: <DllPageIcon className="w-[26px] h-8" />, look: 'border-[#5d7390] bg-[#c3d3e6]' },
  { name: 'Windows Media Player', icon: <MediaPlayerIcon className="w-7 h-[26px]" />, look: 'border-[#5d7390] bg-[#bfd0e6]' },
];

const Taskbar = () => (
  <footer className="h-10 flex items-center border-t border-[#d6e2ee] bg-linear-to-r from-[#8496b0] from-0% via-[#a6c1de] via-15% to-[#a6c1de] to-80%">
    <button aria-label="Start" className="ml-[8px] mr-[14px]"><StartOrb className="w-[37px] h-[37px]" /></button>
    <div className="flex gap-[2px]">
      {apps.map((a) => (
        <button key={a.name} aria-label={a.name} className={`w-[60px] h-[39px] flex items-center justify-center rounded-xs border ${a.look}`}>
          {a.icon}
        </button>
      ))}
    </div>
    <div className="flex-1" />
    <div className="h-full pl-[50px] flex items-center bg-linear-to-r from-[#8496ad00] to-[#8496ad] to-20% text-white">
      <button aria-label="Show hidden icons" className="mr-[11px]">
        <svg viewBox="0 0 8 4" className="w-2 h-1"><path d="M0 4l4-4 4 4z" fill="#fff" /></svg>
      </button>
      <FlagIcon className="w-4 h-4 mr-2" />
      <NetTrayIcon className="w-4 h-4 mr-2" />
      <MutedIcon className="w-4 h-4" />
      <div className="w-[79px] pl-2 text-center leading-[17px]"><p>4:56 AM</p><p>8/29/2023</p></div>
      <button aria-label="Show desktop" className="w-[14px] h-full border-l border-[#46546a] bg-linear-to-r from-[#8a98ab] to-[#5f6e83]" />
    </div>
  </footer>
);

const App: React.FC = () => (
  <main className="relative h-screen flex flex-col overflow-hidden bg-[#27345a] font-['Noto_Sans','Open_Sans',sans-serif] text-[11px] leading-4">
    <PlayerWindow />
    <Taskbar />
    <ExplorerWindow />
  </main>
);

export default App;
